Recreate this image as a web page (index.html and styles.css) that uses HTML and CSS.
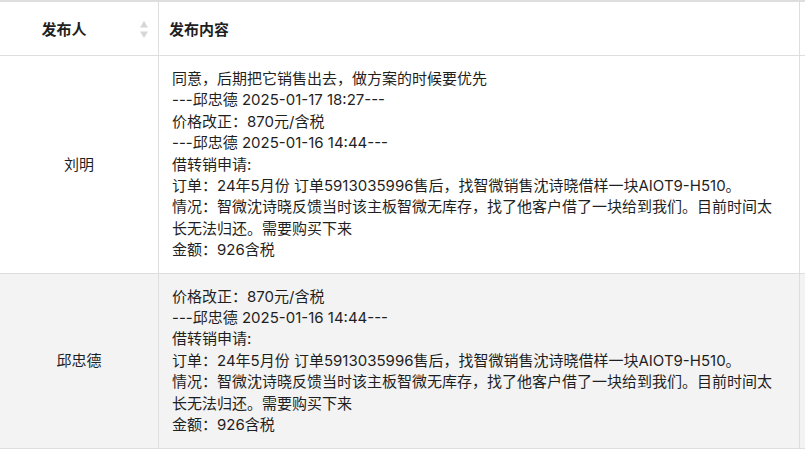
FILE: index.html
```html
<!DOCTYPE html>
<html lang="zh-CN">
<head>
<meta charset="utf-8">
<title>发布记录</title>
<link rel="stylesheet" href="styles.css">
</head>
<body>
<div class="table">
  <div class="th th-name">
    <span class="th-label">发布人</span>
    <span class="sorter">
      <svg width="8" height="17" viewBox="0 0 8 17"><path d="M4 0 L8 6.5 L0 6.5 Z" fill="#d6d6d6"/><path d="M0 10.5 L8 10.5 L4 17 Z" fill="#d6d6d6"/></svg>
    </span>
  </div>
  <div class="th th-content">发布内容</div>
  <div class="th th-extra"></div>

  <div class="td td-name">刘明</div>
  <div class="td td-content">
    <div>同意，后期把它销售出去，做方案的时候要优先</div>
    <div>---邱忠德 2025-01-17 18:27---</div>
    <div>价格改正：870元/含税</div>
    <div>---邱忠德 2025-01-16 14:44---</div>
    <div>借转销申请:</div>
    <div>订单：24年5月份 订单5913035996售后，找智微销售沈诗晓借样一块AIOT9-H510。</div>
    <div>情况：智微沈诗晓反馈当时该主板智微无库存，找了他客户借了一块给到我们。目前时间太长无法归还。需要购买下来</div>
    <div>金额：926含税</div>
  </div>
  <div class="td td-extra"></div>

  <div class="td td-name alt">邱忠德</div>
  <div class="td td-content alt">
    <div>价格改正：870元/含税</div>
    <div>---邱忠德 2025-01-16 14:44---</div>
    <div>借转销申请:</div>
    <div>订单：24年5月份 订单5913035996售后，找智微销售沈诗晓借样一块AIOT9-H510。</div>
    <div>情况：智微沈诗晓反馈当时该主板智微无库存，找了他客户借了一块给到我们。目前时间太长无法归还。需要购买下来</div>
    <div>金额：926含税</div>
  </div>
  <div class="td td-extra alt"></div>
</div>
</body>
</html>
```

FILE: styles.css
```css
html, body {
  margin: 0;
  padding: 0;
  background: #ffffff;
  overflow: hidden;
}

body {
  font-family: "Inter", "Noto Sans CJK SC", sans-serif;
  font-size: 15px;
  color: #1f1f1f;
}

.table {
  display: grid;
  grid-template-columns: 159px 641px 200px;
  width: 1000px;
  border-top: 2px solid #dedede;
}

.th,
.td {
  box-sizing: border-box;
  border-right: 1px solid #dedede;
  border-bottom: 1px solid #dedede;
}

.th {
  height: 54px;
  display: flex;
  align-items: center;
  font-weight: bold;
  background: #ffffff;
}

.th-name {
  padding: 0 10px 0 0;
}

.th-label {
  flex: 1;
  text-align: center;
  margin-right: 12px;
}

.sorter {
  display: flex;
  align-items: center;
  padding-top: 1px;
}

.th-content {
  padding-left: 10px;
}

.td {
  line-height: 21.4px;
}

.td-name {
  display: flex;
  align-items: center;
  justify-content: center;
}

.td-content {
  padding: 12px 20px 12px 13px;
}

.alt {
  background: #f3f3f3;
}
```
